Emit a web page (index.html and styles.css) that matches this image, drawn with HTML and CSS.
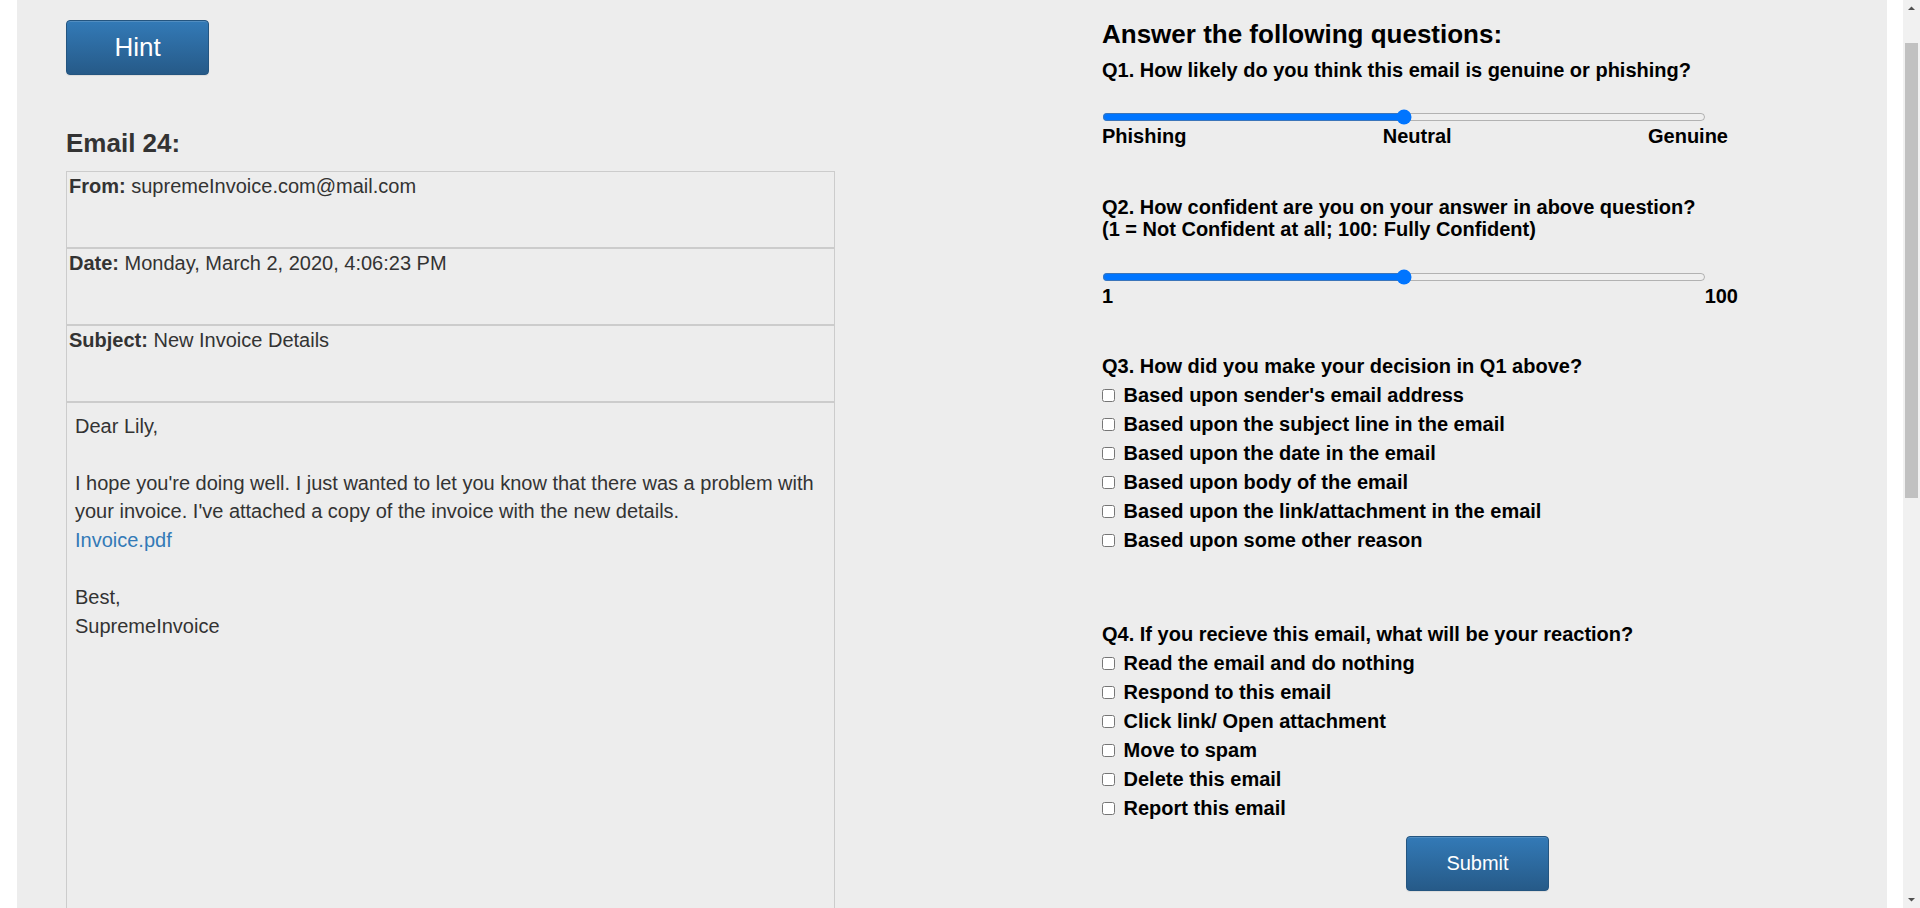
FILE: index.html
```html
<!DOCTYPE html>
<html lang="en">
<head>
<meta charset="utf-8">
<title>Email 24</title>
<link rel="stylesheet" href="styles.css">
</head>
<body>
<div class="panel">
  <div class="left">
    <button class="btn btn-hint" type="button">Hint</button>
    <h3 class="email-title">Email 24:</h3>
    <div class="email">
      <div class="email-row"><b>From:</b> supremeInvoice.com@mail.com</div>
      <div class="email-row"><b>Date:</b> Monday, March 2, 2020, 4:06:23 PM</div>
      <div class="email-row"><b>Subject:</b> New Invoice Details</div>
      <div class="email-body">
        Dear Lily,<br><br>
        I hope you're doing well. I just wanted to let you know that there was a problem with your invoice. I've attached a copy of the invoice with the new details.<br>
        <a href="#" class="attach">Invoice.pdf</a><br><br>
        Best,<br>
        SupremeInvoice
      </div>
    </div>
  </div>
  <div class="right">
    <h3 class="q-title">Answer the following questions:</h3>

    <p class="q-label q1-label">Q1. How likely do you think this email is genuine or phishing?</p>
    <input type="range" class="slider slider-q1" min="0" max="100" value="50">
    <div class="scale scale-q1"><span>Phishing</span><span>Neutral</span><span>Genuine</span></div>

    <p class="q-label q2-label">Q2. How confident are you on your answer in above question?<br>(1 = Not Confident at all; 100: Fully Confident)</p>
    <input type="range" class="slider slider-q2" min="1" max="100" step="any" value="50.5">
    <div class="scale scale-q2"><span>1</span><span>100</span></div>

    <p class="q-label q3-label">Q3. How did you make your decision in Q1 above?</p>
    <div class="options">
      <label class="option"><input type="checkbox"> Based upon sender's email address</label>
      <label class="option"><input type="checkbox"> Based upon the subject line in the email</label>
      <label class="option"><input type="checkbox"> Based upon the date in the email</label>
      <label class="option"><input type="checkbox"> Based upon body of the email</label>
      <label class="option"><input type="checkbox"> Based upon the link/attachment in the email</label>
      <label class="option"><input type="checkbox"> Based upon some other reason</label>
    </div>

    <p class="q-label q4-label">Q4. If you recieve this email, what will be your reaction?</p>
    <div class="options">
      <label class="option"><input type="checkbox"> Read the email and do nothing</label>
      <label class="option"><input type="checkbox"> Respond to this email</label>
      <label class="option"><input type="checkbox"> Click link/ Open attachment</label>
      <label class="option"><input type="checkbox"> Move to spam</label>
      <label class="option"><input type="checkbox"> Delete this email</label>
      <label class="option"><input type="checkbox"> Report this email</label>
    </div>

    <div class="submit-row">
      <button class="btn btn-submit" type="button">Submit</button>
    </div>
  </div>
</div>

<div class="scrollbar" aria-hidden="true">
  <svg class="sb-arrow" width="17" height="17" viewBox="0 0 17 17"><path d="M5 10 L8.5 6.5 L12 10 Z" fill="#505050"/></svg>
  <div class="sb-track"><div class="sb-thumb"></div></div>
  <svg class="sb-arrow" width="17" height="17" viewBox="0 0 17 17"><path d="M5 7 L8.5 10.5 L12 7 Z" fill="#505050"/></svg>
</div>
</body>
</html>
```

FILE: styles.css
```css
html, body {
  margin: 0;
  padding: 0;
  background: #ffffff;
}

body {
  font-family: "Liberation Sans", Arial, Helvetica, sans-serif;
  font-size: 20px;
  line-height: 1.42857;
  color: #333333;
}

.panel {
  margin: 0 33px 0 17px;
  background: #ededed;
  padding: 20px 34px 20px 49px;
  display: flex;
  align-items: flex-start;
  gap: 267px;
}

.left {
  width: 769px;
  flex: none;
}

.btn {
  display: flex;
  align-items: center;
  justify-content: center;
  box-sizing: border-box;
  font-family: "Liberation Sans", Arial, Helvetica, sans-serif;
  color: #ffffff;
  background-color: #2e6da4;
  background-image: linear-gradient(to bottom, #337ab7 0%, #265a88 100%);
  border: 1px solid #245580;
  border-radius: 4px;
  padding: 0;
  cursor: pointer;
  box-shadow: inset 0 1px 0 rgba(255, 255, 255, 0.15), 0 1px 1px rgba(0, 0, 0, 0.075);
}

.btn-hint {
  width: 143px;
  height: 55px;
  font-size: 26px;
}

.btn-submit {
  width: 143px;
  height: 55px;
  font-size: 20px;
}

.email-title {
  margin: 54px 0 13px 0;
  font-size: 26px;
  line-height: 28.6px;
  font-weight: bold;
  color: #333333;
}

.email {
  display: flex;
  flex-direction: column;
}

.email-row {
  border: 1px solid #cccccc;
  height: 75px;
  padding: 0 2px;
  box-sizing: content-box;
}

.email-body {
  border: 1px solid #cccccc;
  padding: 9px 8px;
  min-height: 1300px;
}

.attach {
  color: #337ab7;
  text-decoration: none;
}

.right {
  width: 751px;
  flex: none;
  color: #000000;
  font-weight: bold;
}

.q-title {
  margin: 0;
  font-size: 26px;
  line-height: 28.6px;
  font-weight: bold;
}

.q-label {
  margin: 0;
  line-height: 22px;
}

.q1-label { margin-top: 10px; }
.q2-label { margin-top: 49px; }
.q3-label { margin-top: 48px; }
.q4-label { margin-top: 68px; }

.slider {
  display: block;
  width: 604px;
  height: 16px;
  margin: 28px 0 0 0;
  padding: 0;
}

.slider-q2 { margin-top: 29px; }

.scale {
  display: flex;
  justify-content: space-between;
  line-height: 22px;
}

.scale-q1 { width: 626px; }
.scale-q2 { width: 636px; }

.options {
  margin-top: 4px;
  display: flex;
  flex-direction: column;
}

.option {
  display: flex;
  align-items: center;
  height: 29px;
  line-height: 29px;
  white-space: pre;
}

.option input {
  width: 13px;
  height: 13px;
  margin: 0 3px 0 0;
}

.submit-row {
  display: flex;
  justify-content: center;
  margin-top: 13px;
}

/* drawn browser scrollbar overlay */
.scrollbar {
  position: fixed;
  top: 0;
  right: 0;
  width: 17px;
  height: 100vh;
  background: #f1f1f1;
  display: flex;
  flex-direction: column;
}

.sb-arrow {
  display: block;
  flex: none;
}

.sb-track {
  flex: 1;
  padding: 26px 2px 0 2px;
}

.sb-thumb {
  height: 455px;
  background: #c1c1c1;
}
```
